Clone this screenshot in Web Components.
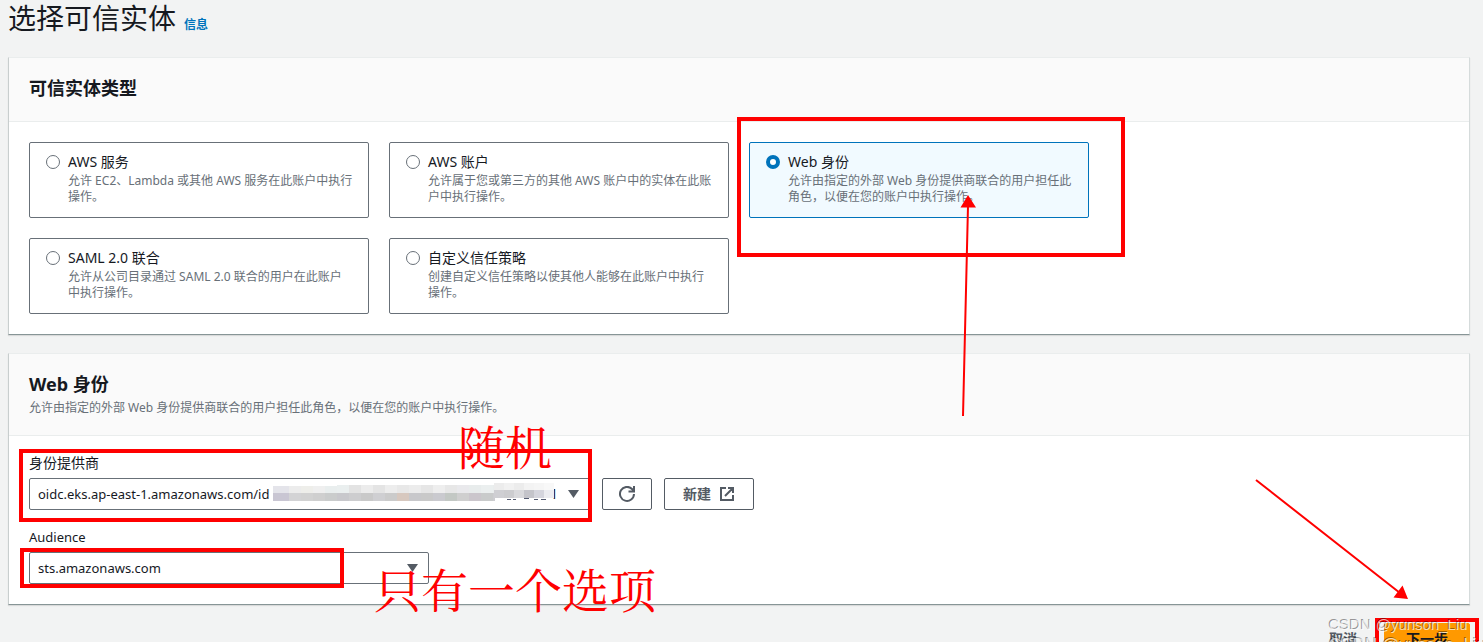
<!DOCTYPE html>
<html lang="zh-CN">
<head>
<meta charset="utf-8">
<title>选择可信实体</title>
<style>
  html, body { margin: 0; height: 100%; overflow: hidden; }
  body {
    background: #f2f3f3;
    color: #16191f;
    font: 14px/22px "Noto Sans", "Noto Sans CJK SC", sans-serif;
  }
</style>
</head>
<body>
<trust-page></trust-page>
<script>
const define = (name, html, setup) => {
  const template = document.createElement('template');
  template.innerHTML = html;
  customElements.define(name, class extends HTMLElement {
    constructor() {
      super();
      this.attachShadow({ mode: 'open' }).append(template.content.cloneNode(true));
    }
    connectedCallback() { if (setup) setup(this, this.shadowRoot); }
  });
};

define('content-panel', `
  <style>
    :host { display: block; background: #fff; border: 1px solid #c8cece; border-top-color: #eaeded; border-right-color: #d5dbdb; border-bottom-color: #879596; box-shadow: 0 1px 1px #0000001a; box-sizing: border-box; }
    header { background: #fafafa; border-bottom: 1px solid #eaeded; padding: 17px 20px; }
    .heading { min-height: 29px; }
    h2 { margin: 0; font-size: 18px; line-height: 26px; font-weight: 700; }
    ::slotted([slot="description"]) { display: block; margin: 0; font-size: 12px; line-height: 21px; color: #687078; }
    .body { padding: var(--panel-padding, 20px); }
  </style>
  <section>
    <header><div class="heading"><h2><slot name="title"></slot></h2><slot name="description"></slot></div></header>
    <div class="body"><slot></slot></div>
  </section>`);

define('radio-tile', `
  <style>
    :host { display: block; }
    label { display: flex; gap: 8px; box-sizing: border-box; height: 100%; padding: 8px 14px 12px 16px; border: 1px solid #687078; border-radius: 2px; background: #fff; }
    :host([checked]) label { border-color: #0073bb; background: #f1faff; }
    input { appearance: none; flex: none; box-sizing: border-box; width: 14px; height: 14px; margin: 4px 0 0; border: 1px solid #687078; border-radius: 50%; background: #fff; }
    input:checked { border: 4px solid #0073bb; }
    .name { display: block; line-height: 22px; }
    .note { display: block; font-size: 12px; line-height: 16px; color: #687078; }
  </style>
  <label><input type="radio" name="entity"><span><span class="name"><slot name="name"></slot></span><span class="note"><slot></slot></span></span></label>`,
  (host, root) => { root.querySelector('input').checked = host.hasAttribute('checked'); });

define('select-field', `
  <style>
    :host { display: block; }
    label { display: block; font-size: var(--label-size, 14px); line-height: 22px; margin-bottom: 4px; }
    .row { display: flex; gap: 12px; }
    .control { position: relative; flex: 0 1 var(--control-width, 400px); }
    select { appearance: none; display: block; width: 100%; height: 32px; box-sizing: border-box; margin: 0; padding: 0 32px 0 8px; border: 1px solid #687078; border-radius: 2px; background: #fff; color: #16191f; font: inherit; font-size: 13px; }
    .arrow { position: absolute; right: 11px; top: 12px; width: 11px; height: 8px; fill: #545b64; pointer-events: none; }
  </style>
  <label for="control"></label>
  <div class="row">
    <div class="control">
      <select id="control"><option></option></select>
      <svg class="arrow" viewBox="0 0 11 8"><path d="M0 0h11L5.500 8z"/></svg>
      <slot name="mask"></slot>
    </div>
    <slot></slot>
  </div>`,
  (host, root) => {
    root.querySelector('label').textContent = host.getAttribute('label');
    root.querySelector('option').textContent = host.getAttribute('value');
  });

define('pixel-mask', `
  <style>
    :host { position: absolute; left: 242px; top: 3px; width: 288px; height: 24px; pointer-events: none; }
    svg { position: absolute; right: 0; top: 0; width: 288px; height: 24px; }
    span { position: absolute; right: 1px; top: 2px; line-height: 22px; }
  </style>
  <span>1</span>
  <svg viewBox="-6 0 288 24" shape-rendering="crispEdges"></svg>`,
  (host, root) => {
    const upper = ['#e4e4ea','#ececec','#eeeeea','#efefef','#e9eeee','#eaefef','#e3e3e3','#ececec','#e4e4e4','#ededed','#e8e8e8','#ececec','#e6e6e6','#eeeeee','#e7e7e7','#e9e9ec','#e8ecec','#ebefef','#e9eded'];
    const lower = ['#c9c6d3','#d3d3d5','#d2d2d2','#cfcfcf','#cacccc','#c8c8cc','#cdcdcf','#c9c9c9','#cfcfd2','#cbcbcb','#d7c8bf','#c8c8cb','#c9c9c9','#cacacf','#c3c8c4','#cfcfcf','#cbc6cc','#c9cbcb','#cdcdd1'];
    let out = '<rect x="-4" y="5" width="4" height="7" fill="#e4e4ea"/><rect x="-4" y="12" width="4" height="8" fill="#c9c6d3"/>';
    upper.forEach((c, i) => {
      const w = i < 18 ? 12 : 2;
      out += `<rect x="${i * 12}" y="${i < 5 ? 5 : 4}" width="${w}" height="8" fill="${c}"/><rect x="${i * 12}" y="12" width="${w}" height="8" fill="${lower[i]}"/>`;
    });
    ['#ececec','#f1f1f1','#ececec','#f3f3f3','#f5f5f5','#f8f8f8'].forEach((c, i) => {
      const d = ['#cfcfd3','#cccccf','#d9d9dc','#c4c4ca','#d5d5dd','#ececf0'][i];
      out += `<rect x="${217 + i * 10}" y="2" width="10" height="9" fill="${c}"/><rect x="${217 + i * 10}" y="9" width="10" height="8" fill="${d}"/>`;
    });
    out += '<path d="M230 18h4m2 0h3m8-1h5m5 1h4m3 0h5" stroke="#555b70" stroke-width="1"/>';
    root.querySelector('svg').innerHTML = out;
  });

define('action-button', `
  <style>
    :host { display: block; }
    button { display: flex; align-items: center; justify-content: center; gap: 8px; box-sizing: border-box; height: 32px; margin: 0; padding: 0 18px; border: 1px solid #545b64; border-radius: 2px; background: #fff; color: #545b64; font: 700 14px/22px "Noto Sans", "Noto Sans CJK SC", sans-serif; white-space: nowrap; }
    :host([variant="icon"]) button { padding: 0 16px; }
    :host([variant="link"]) button { border-color: transparent; background: none; }
    :host([variant="primary"]) button { border-color: #ff9900; background: #ff9900; color: #16191f; padding: 0 21px; }
  </style>
  <button type="button"><slot></slot></button>`,
  (host, root) => { if (host.title) root.querySelector('button').setAttribute('aria-label', host.title); });

define('line-icon', `
  <style>
    :host { display: block; width: 16px; height: 16px; }
    svg { display: block; width: 16px; height: 16px; fill: none; stroke: #545b64; stroke-width: 2; }
  </style>
  <svg viewBox="0 0 16 16"></svg>`,
  (host, root) => {
    root.querySelector('svg').innerHTML = {
      refresh: '<path d="M15 8A7 7 0 1 1 13 3L15 5M15 0V5.500H9.500"/>',
      external: '<path d="M7 2H2V14H14V9M9 2H14V7M14 2L6 10"/>'
    }[host.getAttribute('name')];
  });

define('red-frame', `
  <style>:host { position: absolute; box-sizing: border-box; border: 4px solid #f00; }</style>`);

define('markup-layer', `
  <style>
    :host { position: absolute; inset: 0; overflow: hidden; pointer-events: none; }
    svg { position: absolute; left: 0; top: 0; width: 1483px; height: 642px; }
    .provider { left: 19px; top: 449px; width: 573px; height: 73px; }
    .audience { left: 20px; top: 548px; width: 324px; height: 40px; }
    .web { left: 737px; top: 117px; width: 388px; height: 140px; }
    .next { left: 1375px; top: 618px; width: 104px; height: 60px; }
    p { position: absolute; margin: 0; color: #f00; font: 400 47px/48px "Noto Serif CJK SC", "AR PL UMing CN", "Noto Sans CJK SC", serif; white-space: nowrap; }
    .random { left: 458px; top: 421px; }
    .only { left: 374px; top: 564px; }
    .stamp { color: #ffffffb3; font: 15px/20px "Liberation Sans", Arial, sans-serif; text-shadow: -1px -1px 0 #00000066; }
    .first { left: 1329px; top: 615px; }
    .second { left: 1329px; top: 635px; font-size: 17px; }
  </style>
  <red-frame class="web"></red-frame>
  <red-frame class="provider"></red-frame>
  <red-frame class="audience"></red-frame>
  <red-frame class="next"></red-frame>
  <svg viewBox="0 0 1483 642" stroke="#f00" fill="#f00" stroke-width="2">
    <path d="M963 416L968 206M1256 480L1400 593"/>
    <path stroke="none" d="M968 195L976 207.500H960.500zM1408 599L1393.500 597.500L1402.500 585.500z"/>
  </svg>
  <p class="random">随机</p>
  <p class="only">只有一个选项</p>
  <p class="stamp first">CSDN @yunson_Liu</p>
  <p class="stamp second">CSDN @yunson_Liu</p>`);

define('trust-page', `
  <style>
    :host { display: block; position: relative; height: 100vh; overflow: hidden; }
    main { padding: 0 13px 0 8px; }
    .title { display: flex; align-items: baseline; gap: 8px; height: 57px; }
    h1 { margin: 0; font-size: 28px; line-height: 36px; font-weight: 400; }
    a { color: #0073bb; font-size: 12px; font-weight: 700; text-decoration: none; }
    .stack { display: grid; gap: 18px; }
    .tiles { display: grid; grid-template-columns: repeat(4, 1fr); gap: 20px; }
    .new-row { grid-column: 1; }
    .form { --panel-padding: 16px 20px 20px; }
    .fields { display: grid; gap: 16px; }
    .provider { --control-width: 561px; }
    .audience { --label-size: 13px; }
    footer { display: flex; justify-content: flex-end; gap: 8px; padding-top: 18px; }
  </style>
  <main>
    <div class="title"><h1>选择可信实体</h1><a href="#info">信息</a></div>
    <div class="stack">
      <content-panel>
        <span slot="title">可信实体类型</span>
        <div class="tiles">
          <radio-tile><span slot="name">AWS 服务</span>允许 EC2、Lambda 或其他 AWS 服务在此账户中执行操作。</radio-tile>
          <radio-tile><span slot="name">AWS 账户</span>允许属于您或第三方的其他 AWS 账户中的实体在此账户中执行操作。</radio-tile>
          <radio-tile checked><span slot="name">Web 身份</span>允许由指定的外部 Web 身份提供商联合的用户担任此角色，以便在您的账户中执行操作。</radio-tile>
          <radio-tile class="new-row"><span slot="name">SAML 2.0 联合</span>允许从公司目录通过 SAML 2.0 联合的用户在此账户<br>中执行操作。</radio-tile>
          <radio-tile><span slot="name">自定义信任策略</span>创建自定义信任策略以使其他人能够在此账户中执行操作。</radio-tile>
        </div>
      </content-panel>
      <content-panel class="form">
        <span slot="title">Web 身份</span>
        <p slot="description">允许由指定的外部 Web 身份提供商联合的用户担任此角色，以便在您的账户中执行操作。</p>
        <div class="fields">
          <select-field class="provider" label="身份提供商" value="oidc.eks.ap-east-1.amazonaws.com/id">
            <pixel-mask slot="mask"></pixel-mask>
            <action-button variant="icon" title="刷新"><line-icon name="refresh"></line-icon></action-button>
            <action-button>新建<line-icon name="external"></line-icon></action-button>
          </select-field>
          <select-field class="audience" label="Audience" value="sts.amazonaws.com"></select-field>
        </div>
      </content-panel>
    </div>
    <footer>
      <action-button variant="link">取消</action-button>
      <action-button variant="primary">下一步</action-button>
    </footer>
  </main>
  <markup-layer></markup-layer>`);
</script>
</body>
</html>
